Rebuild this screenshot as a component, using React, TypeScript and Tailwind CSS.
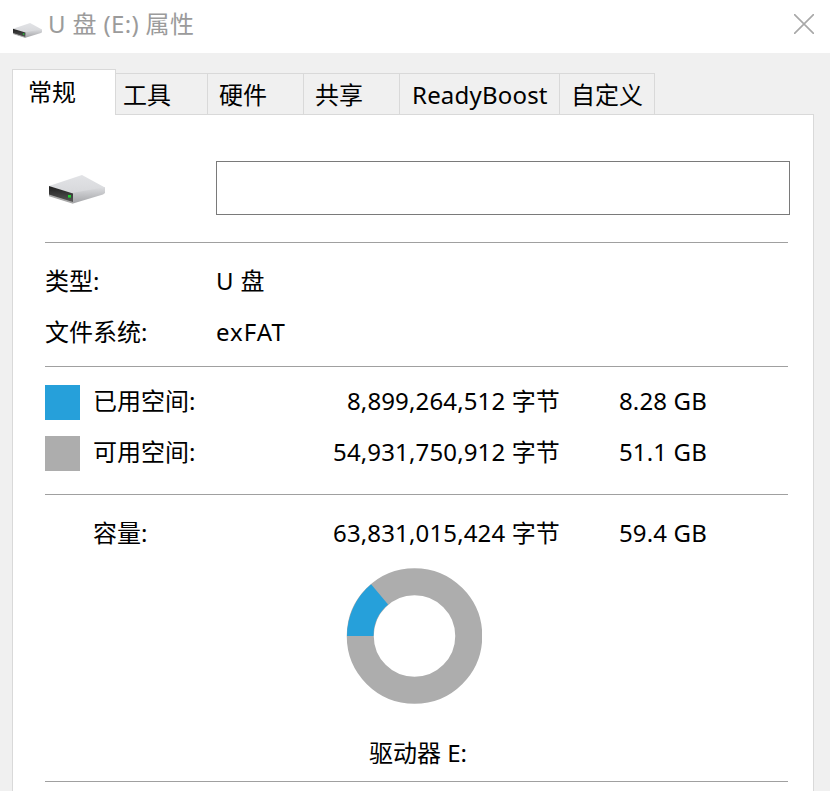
const FONT = "font-['Noto_Sans','Noto_Sans_CJK_SC',sans-serif]";

function DriveIcon({ id, className }: { id: string; className: string }) {
  return (
    <svg viewBox="0 0 56 29" className={className}>
      <defs>
        <linearGradient id={`${id}top`} x1="0" y1="0" x2="0" y2="1">
          <stop offset="0" stopColor="#e2e3e6" />
          <stop offset="1" stopColor="#d6d7da" />
        </linearGradient>
        <linearGradient id={`${id}side`} x1="0" y1="0" x2="0" y2="1">
          <stop offset="0" stopColor="#dcdde0" />
          <stop offset="1" stopColor="#a3a4a7" />
        </linearGradient>
        <linearGradient id={`${id}front`} x1="0" y1="0" x2="0" y2="1">
          <stop offset="0" stopColor="#1e1e1e" />
          <stop offset="1" stopColor="#5a5a5a" />
        </linearGradient>
      </defs>
      <polygon points="0,11 33,0 55,12 56,14 24,20" fill={`url(#${id}top)`} />
      <polygon points="23,18 56,12 56,18 54,19.5 24,28.5" fill={`url(#${id}side)`} />
      <polygon points="0,11 24,18.5 24,28 0,20.5" fill={`url(#${id}front)`} />
      <polygon points="0,19.5 24,27 24,28.8 0,21.3" fill="#a8a8a8" />
      <rect x="19" y="20" width="3" height="2.6" fill="#22d030" />
    </svg>
  );
}

const tabs = [
  { label: "工具", w: "w-[92px]", pl: "pl-[7px]" },
  { label: "硬件", w: "w-[96px]", pl: "pl-[11px]" },
  { label: "共享", w: "w-[96px]", pl: "pl-[11px]" },
  { label: "ReadyBoost", w: "w-[160px]", pl: "pl-[12px] tracking-[0.2px]" },
  { label: "自定义", w: "w-[95px]", pl: "pl-[11px]" },
];

function Hr({ className }: { className: string }) {
  return <div className={`h-px w-[743px] bg-[#a0a0a0] ${className}`} />;
}

function SpaceRow({ swatch, label, bytes, gb, className }: { swatch?: string; label: string; bytes: string; gb: string; className: string }) {
  return (
    <div className={`flex items-center h-[36px] ${className}`}>
      <div className={`w-[35px] h-[35px] mr-[13px] ${swatch ?? ""}`} />
      <div className="w-[171px] pb-[2px]">{label}</div>
      <div className="w-[296px] text-right tracking-[0.14px] pb-[2px]">{bytes}</div>
      <div className="ml-[59px] whitespace-nowrap tracking-[0.14px] pb-[2px]">{gb}</div>
    </div>
  );
}

export default function App() {
  return (
    <div className={`${FONT} h-[791px] w-[830px] overflow-hidden bg-[#f0f0f0] text-[24px] leading-[32px] text-black`}>
      <div className="h-[53px] bg-white flex items-center relative">
        <DriveIcon id="a" className="w-[29px] h-[15px] ml-[13px] mt-[8px]" />
        <span className="ml-[6px] pb-[5px] text-[#9b9b9b] whitespace-nowrap tracking-[0.35px]">U 盘 (E:) 属性</span>
        <svg viewBox="0 0 20 20" className="absolute left-[794px] top-[14px] w-[20px] h-[20px]">
          <path d="M0 0L20 20M20 0L0 20" stroke="#a8a8a8" strokeWidth="1.6" fill="none" />
        </svg>
      </div>
      <div className="flex items-end h-[61px] pl-[12px]">
        <div className="w-[104px] h-[46px] bg-white border border-b-0 border-[#d9d9d9] pl-[15px] pt-[6px] relative z-10 -mb-px">常规</div>
        {tabs.map((t) => (
          <div key={t.label} className={`${t.w} ${t.pl} h-[41px] border-t border-r border-[#d9d9d9] pt-[5px] whitespace-nowrap`}>
            {t.label}
          </div>
        ))}
      </div>
      <div className="ml-[12px] w-[802px] h-[800px] bg-white border border-[#d9d9d9] pl-[32px]">
        <div className="flex h-[127px] pt-[46px]">
          <DriveIcon id="b" className="w-[56px] h-[29px] ml-[4px] mt-[14px]" />
          <div className="ml-[111px] w-[574px] h-[54px] border border-[#7a7a7a]" />
        </div>
        <Hr className="" />
        <div className="flex h-[32px] items-center mt-[23px] pb-[2px]">
          <div className="w-[171px]">类型:</div>
          <div className="tracking-[0.3px]">U 盘</div>
        </div>
        <div className="flex h-[32px] items-center mt-[19px] pb-[2px]">
          <div className="w-[171px]">文件系统:</div>
          <div className="tracking-[1px]">exFAT</div>
        </div>
        <Hr className="mt-[17px]" />
        <SpaceRow swatch="bg-[#26a0da]" label="已用空间:" bytes="8,899,264,512 字节" gb="8.28 GB" className="mt-[17px]" />
        <SpaceRow swatch="bg-[#adadad]" label="可用空间:" bytes="54,931,750,912 字节" gb="51.1 GB" className="mt-[15px]" />
        <Hr className="mt-[23px]" />
        <SpaceRow label="容量:" bytes="63,831,015,424 字节" gb="59.4 GB" className="mt-[21px]" />
        <svg viewBox="-0.5 0 136 136" className="w-[136px] h-[136px] ml-[301px] mt-[16px]">
          <circle cx="68" cy="68" r="54.25" fill="none" stroke="#adadad" strokeWidth="27" />
          <path d="M0.5 68A67.5 67.5 0 0 1 24.6 16.3L41.6 36.6A41 41 0 0 0 27 68Z" fill="#26a0da" />
        </svg>
        <div className="h-[32px] mt-[33px] ml-[324px] whitespace-nowrap">驱动器 E:</div>
        <Hr className="mt-[12px]" />
      </div>
    </div>
  );
}
